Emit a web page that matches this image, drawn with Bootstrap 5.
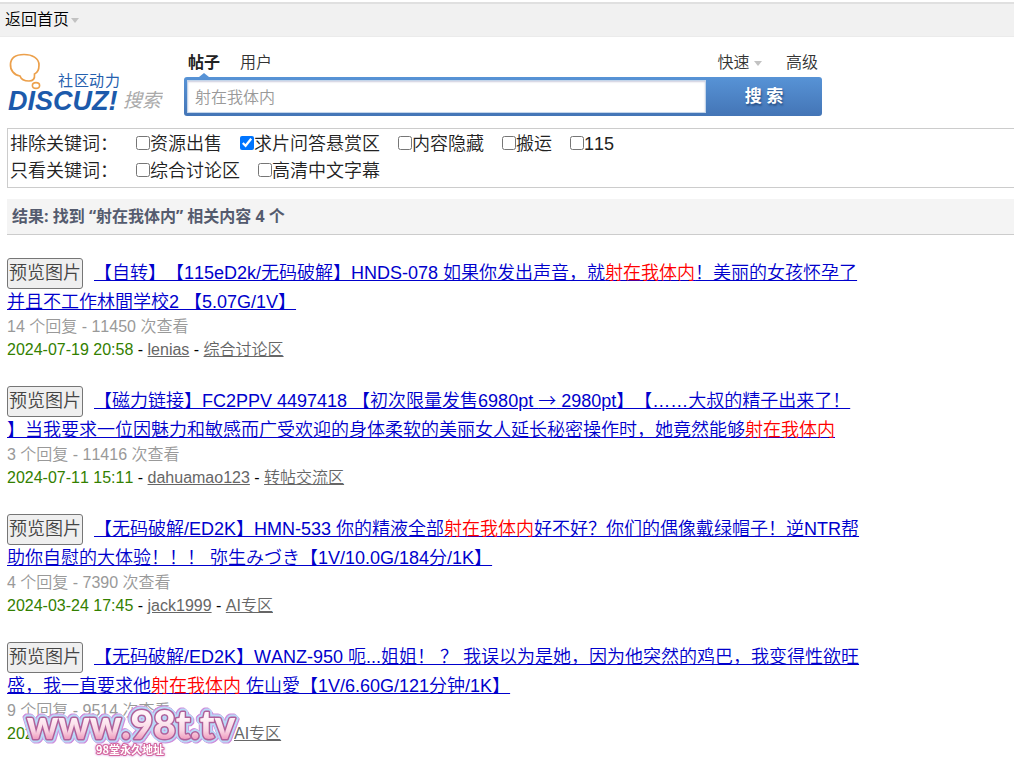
<!DOCTYPE html>
<html lang="zh-CN">
<head>
<meta charset="utf-8">
<meta name="viewport" content="width=device-width, initial-scale=1">
<title>搜索</title>
<link href="https://cdn.jsdelivr.net/npm/bootstrap@5.3.0/dist/css/bootstrap.min.css" rel="stylesheet">
<style>
body{font-family:"Liberation Sans","Noto Sans CJK SC",sans-serif;font-size:16px;line-height:24px;font-weight:350;color:#333;background:#fff;font-kerning:none;text-spacing-trim:space-all}
.topbar{margin-top:2px;border-top:2px solid #e0e0e0;border-bottom:1px solid #ebebeb;background:#f1f1f1;height:35px;padding:0 5px}
.topbar a{color:#000}
.caret{display:inline-block;border:4px solid transparent;border-top:5px solid #c2c2c2;border-bottom:0}
.content{padding-left:7px}
.head{padding-top:13px;gap:21px}
.logo{width:156px;height:70px;margin-bottom:-6px;flex:none}
.finder{width:638px}
.tabs{height:27px;line-height:26px;padding:0 4px}
.tabs a{color:#333;text-decoration:none}
.tabs .current{color:#222;font-weight:700;margin-right:20px}
.current::after{content:"";position:absolute;left:50%;bottom:0;margin-left:-5px;border:5px solid transparent;border-bottom:4px solid #5793d6;border-top:0}
.searchbar{height:39px;border-radius:3px;background:linear-gradient(#5793d6,#4475b6);padding:3px 0 3px 3px}
.searchbar input{border:1px solid #c3d5ea;border-radius:0;background:#fff;color:#999;font-size:16px;font-weight:350;padding:2px 7px 0;min-width:0;box-shadow:inset 0 1px 2px #ccd}
.searchbar button{width:116px;border:0;background:none;color:#fff;font-weight:700;font-size:17px;text-shadow:1px 2px 2px #285086;padding:0}
.filters{margin-top:12px;border:1px solid #ccc;border-right:0;padding:2px;font-size:18px;line-height:27px;color:#222}
.filters .caption{width:126px}
.filters .choices{column-gap:18px}
.filters input{width:14px;height:14px;margin:0 0 3px;accent-color:#0075ff}
.summary{margin:11px 0 0;background:#f4f4f4;border-bottom:1px solid #ccc;padding:5px;font:700 16px/25px "Open Sans","Noto Sans CJK SC",sans-serif;color:#545b6e}
.results{padding:23px 0 18px}
.result{margin-bottom:25px}
.title{font-size:18px;line-height:29px;margin:0 0 -2px;padding-top:1px;font-weight:350;white-space:nowrap}
.title a{color:#0000cc}
.title em{color:red;font-style:normal}
.arrow{font-family:"Noto Sans CJK SC",sans-serif;line-height:1}
.title button{border:1px solid #767676;border-radius:3px;background:#efefef;color:#444;font-size:18px;font-weight:350;line-height:27px;padding:1px;width:76px;margin:-1px 11px -1px 0;text-align:center}
.meta{margin:0;line-height:23px;color:#999}
.byline{color:#000}
.byline time{color:#338000}
.byline a{color:#666}
.covered{width:227px}
.watermark{left:14px;top:56px;width:220px;height:66px}
.halo{paint-order:stroke;filter:drop-shadow(1px 1px 0 #b9d8f7) drop-shadow(-1px -1px 0 #b9d8f7) drop-shadow(1px -1px 0 #b9d8f7) drop-shadow(-1px 1px 0 #b9d8f7) drop-shadow(1px 1px 0 #cf8fdc) drop-shadow(-1px -1px 0 #cf8fdc)}
.subhalo{paint-order:stroke;filter:drop-shadow(0 0 1px #cf8fdc)}
</style>
</head>
<body>
<nav class="topbar d-flex align-items-center"><a class="text-decoration-none" href="#">返回首页 <span class="caret align-middle" style="margin-left:-2px"></span></a></nav>
<div class="content">
<header class="head d-flex">
<svg class="logo" viewBox="0 0 156 70" role="img" aria-label="Discuz! 搜索">
<path d="M13 26C7 25 3 20 3.500 14C4 7 10 4.500 17 4.500C25 4.500 32 8 32 15C32 20 30 23 27.500 24C28 29 26 31 22 31C17 31 14 29 13 26Z" fill="none" stroke="#eca04b" stroke-width="1.700"/>
<ellipse cx="29" cy="35.500" rx="3.600" ry="2.900" fill="#fff" stroke="#eca04b" stroke-width="1.600"/>
<g font-family="Noto Sans CJK SC,sans-serif" font-weight="400"><text x="51" y="36" font-size="15" fill="#2560ae">社</text><text x="67" y="36" font-size="15" fill="#2560ae">区</text><text x="82" y="36" font-size="15" fill="#2560ae">动</text><text x="98" y="36" font-size="15" fill="#2560ae">力</text>
<text x="116" y="57" font-size="19" font-style="italic" fill="#aaa">搜索</text></g>
<text x="1" y="60" font-family="Liberation Sans,sans-serif" font-size="27" font-weight="700" font-style="italic" fill="#1c5aab">DISCUZ!</text>
</svg>
<form class="finder" onsubmit="return false">
<div class="tabs d-flex"><a class="current position-relative" href="#">帖子</a><a href="#">用户</a><a class="ms-auto me-4" href="#">快速 <span class="caret align-middle"></span></a><a href="#">高级</a></div>
<div class="searchbar d-flex"><input class="flex-grow-1" type="text" value="射在我体内" aria-label="搜索内容"><button type="submit">搜 索</button></div>
</form>
</header>
<section class="filters">
<div class="d-flex"><span class="caption">排除关键词：</span><div class="choices d-flex flex-wrap">
<label class="d-flex align-items-center"><input type="checkbox">资源出售</label>
<label class="d-flex align-items-center"><input type="checkbox" checked>求片问答悬赏区</label>
<label class="d-flex align-items-center"><input type="checkbox">内容隐藏</label>
<label class="d-flex align-items-center"><input type="checkbox">搬运</label>
<label class="d-flex align-items-center"><input type="checkbox">115</label></div></div>
<div class="d-flex"><span class="caption">只看关键词：</span><div class="choices d-flex flex-wrap">
<label class="d-flex align-items-center"><input type="checkbox">综合讨论区</label>
<label class="d-flex align-items-center"><input type="checkbox">高清中文字幕</label></div></div>
</section>
<h2 class="summary">结果: 找到 “射在我体内” 相关内容 4 个</h2>
<main class="results">
<article class="result">
<h3 class="title"><button type="button">预览图片</button><a href="#">【自转】【115eD2k/无码破解】HNDS-078 如果你发出声音，就<em>射在我体内</em>！美丽的女孩怀孕了<br>并且不工作林間学校2 【5.07G/1V】</a></h3>
<p class="meta">14 个回复 - 11450 次查看</p>
<p class="meta byline"><time>2024-07-19 20:58</time> - <a href="#">lenias</a> - <a href="#">综合讨论区</a></p>
</article>
<article class="result">
<h3 class="title"><button type="button">预览图片</button><a href="#">【磁力链接】FC2PPV 4497418 【初次限量发售6980pt <span class="arrow">→</span> 2980pt】【……大叔的精子出来了！<br>】当我要求一位因魅力和敏感而广受欢迎的身体柔软的美丽女人延长秘密操作时，她竟然能够<em>射在我体内</em></a></h3>
<p class="meta">3 个回复 - 11416 次查看</p>
<p class="meta byline"><time>2024-07-11 15:11</time> - <a href="#">dahuamao123</a> - <a href="#">转帖交流区</a></p>
</article>
<article class="result">
<h3 class="title"><button type="button">预览图片</button><a href="#">【无码破解/ED2K】HMN-533 你的精液全部<em>射在我体内</em>好不好？你们的偶像戴绿帽子！逆NTR帮<br>助你自慰的大体验！！！ 弥生みづき【1V/10.0G/184分/1K】</a></h3>
<p class="meta">4 个回复 - 7390 次查看</p>
<p class="meta byline"><time>2024-03-24 17:45</time> - <a href="#">jack1999</a> - <a href="#">AI专区</a></p>
</article>
<article class="result position-relative mb-0">
<h3 class="title"><button type="button">预览图片</button><a href="#">【无码破解/ED2K】WANZ-950 呃...姐姐！ ？ 我误以为是她，因为他突然的鸡巴，我变得性欲旺<br>盛，我一直要求他<em>射在我体内</em> 佐山愛【1V/6.60G/121分钟/1K】</a></h3>
<p class="meta">9 个回复 - 9514 次查看</p>
<p class="meta byline d-flex"><time class="covered">2024-</time><a href="#">AI专区</a></p>
<svg class="watermark position-absolute" viewBox="0 0 220 66" role="img" aria-label="www.98t.tv">
<defs><linearGradient id="pink" x1="0" y1="0" x2="0" y2="1"><stop offset=".35" stop-color="#fff3f8"/><stop offset=".65" stop-color="#f9d3e2"/><stop offset="1" stop-color="#e66a9e"/></linearGradient></defs>
<text class="halo" x="110" y="41" font-family="Lato,sans-serif" font-weight="900" font-size="39" text-anchor="middle" stroke-linejoin="round" fill="url(#pink)" stroke="#b0609a" stroke-width="3">www.98t.tv</text>
<text class="subhalo" x="109" y="56" font-family="Noto Sans CJK SC,sans-serif" font-weight="700" font-size="11" text-anchor="middle" stroke-linejoin="round" fill="#fff" stroke="#d5669c" stroke-width="2">98堂永久地址</text>
</svg>
</article>
</main>
</div>
<script src="https://cdn.jsdelivr.net/npm/bootstrap@5.3.0/dist/js/bootstrap.bundle.min.js"></script>
</body>
</html>
